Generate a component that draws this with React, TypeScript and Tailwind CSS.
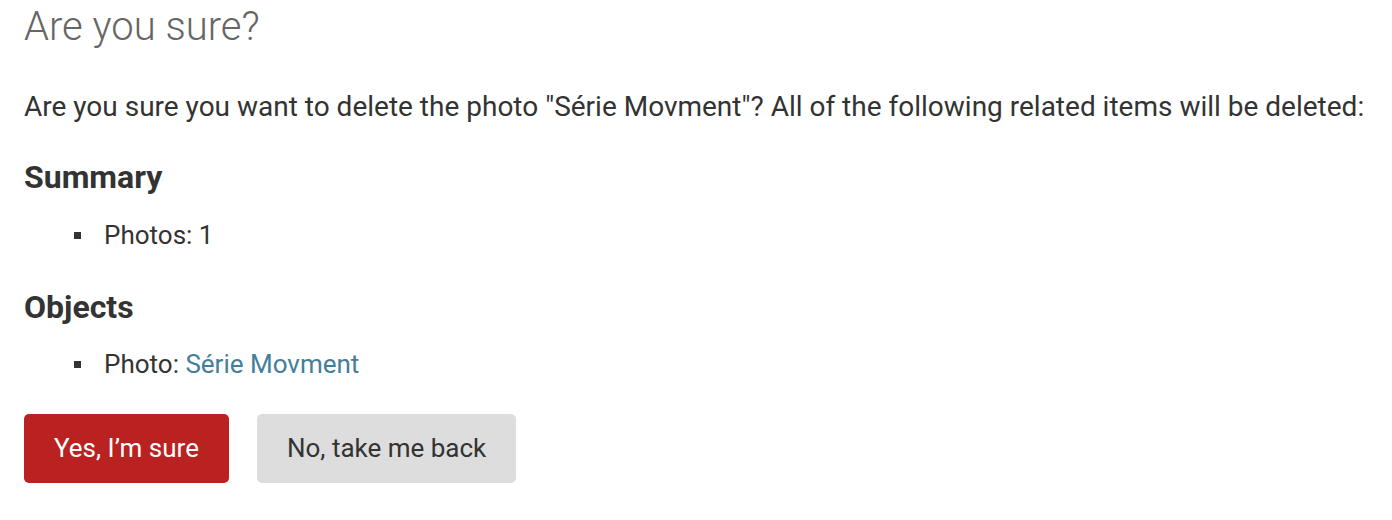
// App.tsx

const font = { fontFamily: "Roboto, 'Liberation Sans', sans-serif" };

interface RelatedItem {
  label: string;
  value: string;
  link?: boolean;
}

const summary: RelatedItem[] = [{ label: "Photos", value: "1" }];
const objects: RelatedItem[] = [{ label: "Photo", value: "Série Movment", link: true }];

function ItemList({ items, className }: { items: RelatedItem[]; className: string }) {
  return (
    <ul className={`pl-[50px] ${className}`}>
      {items.map((item) => (
        <li key={item.label} className="flex items-center gap-[23px] text-[26px] leading-[36px] text-[#333]">
          {/* square bullet */}
          <span className="w-[7px] h-[7px] bg-[#333] shrink-0" />
          <span>
            {item.label}:{" "}
            {item.link ? (
              <a href="#" className="text-[#447e9b] no-underline">
                {item.value}
              </a>
            ) : (
              item.value
            )}
          </span>
        </li>
      ))}
    </ul>
  );
}

export default function App() {
  return (
    <div className="min-h-screen bg-white px-6" style={font}>
      <h1 className="text-[40px] leading-[54px] font-light text-[#666]">Are you sure?</h1>

      <p className="mt-[35px] text-[28px] leading-[36px] text-[#333] whitespace-nowrap">
        Are you sure you want to delete the photo "Série Movment"? All of the following related items will be deleted:
      </p>

      <h2 className="mt-[32px] text-[32px] leading-[40px] font-bold text-[#333]">Summary</h2>
      <ItemList items={summary} className="mt-[20px]" />

      <h2 className="mt-[34px] text-[32px] leading-[40px] font-bold text-[#333]">Objects</h2>
      <ItemList items={objects} className="mt-[19px]" />

      <div className="mt-[32px] flex gap-[28px]">
        <button className="h-[69px] px-[30px] rounded-[5px] bg-[#ba2121] text-white text-[26px]">
          Yes, I’m sure
        </button>
        <button className="h-[69px] px-[30px] rounded-[5px] bg-[#ddd] text-[#333] text-[26px]">
          No, take me back
        </button>
      </div>
    </div>
  );
}
